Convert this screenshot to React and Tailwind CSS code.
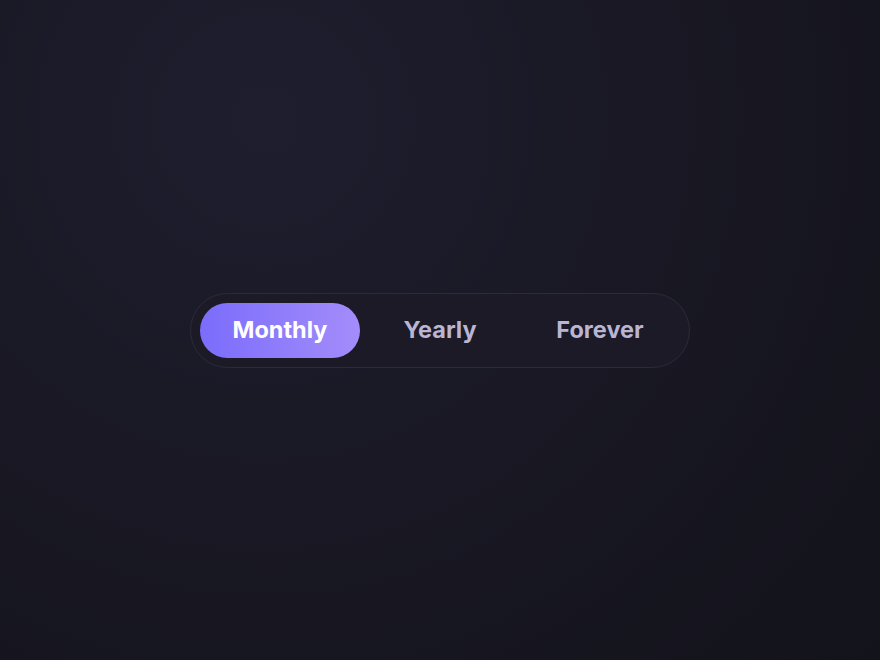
import React, { useState } from "react";

const tabs = ["Monthly", "Yearly", "Forever"];

const App = () => {
  const [active, setActive] = useState("Monthly");

  return (
    <div
      className="w-[880px] h-[660px] flex items-center justify-center bg-[radial-gradient(circle_at_30%_18%,#1f1e2f_0%,#191824_45%,#13131b_100%)]"
      style={{ fontFamily: "Inter, 'Noto Sans', sans-serif" }}
    >
      <div className="flex p-[9px] rounded-full border border-[#2c2b39] bg-[#1b1a26]">
        {tabs.map((tab) => (
          <button
            key={tab}
            onClick={() => setActive(tab)}
            className={`w-[160px] h-[55px] rounded-full text-[23.5px] font-bold ${
              active === tab
                ? "bg-gradient-to-r from-[#7b6cfb] to-[#a48cfa] text-white"
                : "text-[#b9b5d3]"
            }`}
          >
            {tab}
          </button>
        ))}
      </div>
    </div>
  );
};

export default App;
